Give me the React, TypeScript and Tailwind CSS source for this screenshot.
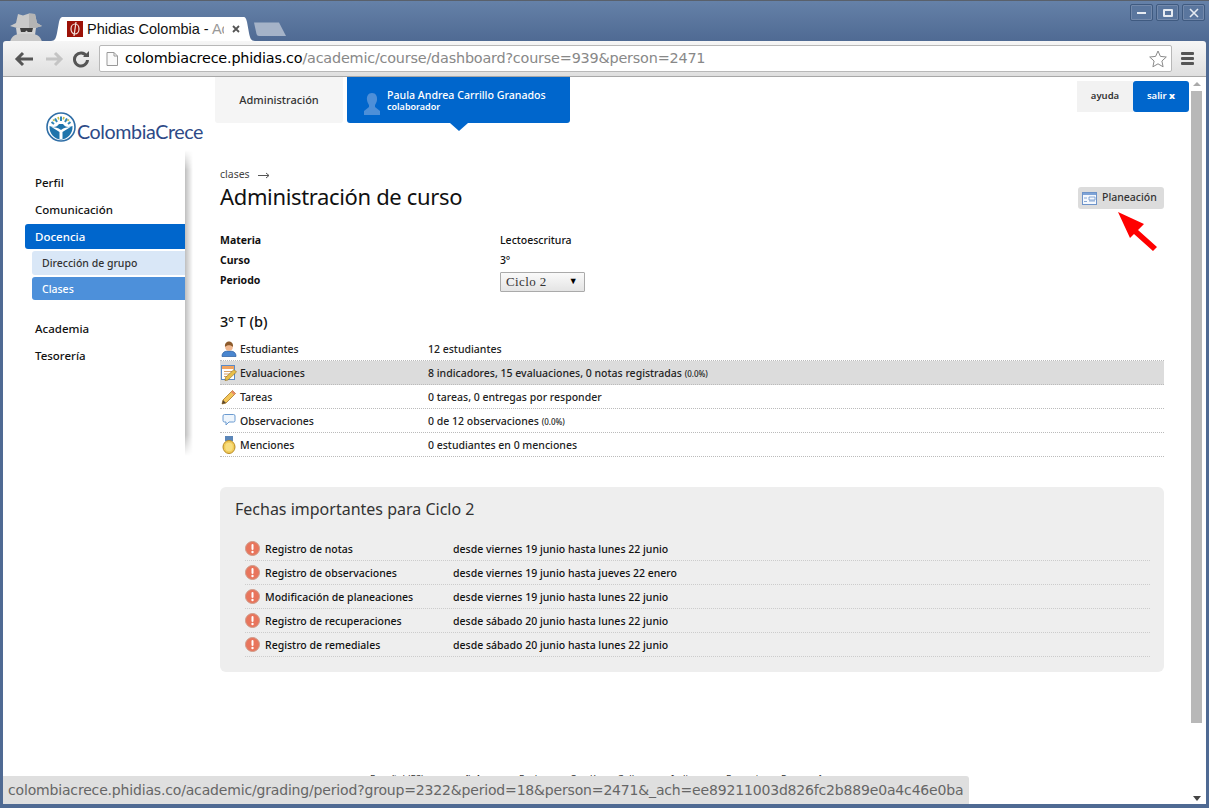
import type { ReactNode } from 'react'

const sans = 'font-["Noto_Sans",sans-serif]'

function Incognito() {
  return (
    <svg width="34" height="29" viewBox="0 0 34 29" className="shrink-0">
      <path d="M9 1 L14 2.500 L20 .5 L26 1 L28 10 L33 13 L26 15 H8 L1 13 L7 10 Z" fill="#c9c9c9" />
      <path d="M20 .5 L26 1 L28 10 L33 13 L26 15 H20 Z" fill="#b4b4b4" />
      <path d="M7 15 H27 L26 22 H8 Z" fill="#d2d2d2" />
      <path d="M11 15 H24 L23 19 H19 L17.500 17.500 L16 19 H12 Z" fill="#3f3f3f" />
      <path d="M1 29 C2 24 6 21 11 21 H23 C28 21 32 24 33 29 Z" fill="#c9c9c9" />
    </svg>
  )
}

function PhidiasFavicon() {
  return (
    <svg width="16" height="16" viewBox="0 0 16 16" className="shrink-0">
      <rect width="16" height="16" fill="#9c1208" />
      <ellipse cx="8" cy="8" rx="4" ry="5" fill="none" stroke="#f2e4df" strokeWidth="1.2" />
      <path d="M9 1 L7 15" stroke="#f2e4df" strokeWidth="1.2" />
    </svg>
  )
}

function WindowButton({ children }: { children: ReactNode }) {
  return (
    <div className="w-[23px] h-[17px] rounded-[2px] border border-[#3f5a80] bg-[#5a769e] flex items-center justify-center shadow-[inset_0_0_0_1px_#7389ab]">
      {children}
    </div>
  )
}

function TabStrip() {
  return (
    <div className="h-[41px] shrink-0 bg-gradient-to-b from-[#6581a8] to-[#4f6a93] flex items-start border-t border-[#59606b]">
      <div className="ml-[9px] mt-[12px] h-[28px] overflow-hidden"><Incognito /></div>
      <div className="ml-[8px] mt-[16px] flex items-end h-[24px]">
        <svg width="12" height="24" viewBox="0 0 12 24" className="shrink-0"><path d="M0 24 C4 24 5 21 6 16 L8 5 C9 1 10 0 12 0 V24 Z" fill="#fff" /></svg>
        <div className="h-[24px] w-[181px] bg-white flex items-center text-[#111]">
          <div className="ml-[4px] mr-[4px]"><PhidiasFavicon /></div>
          <span className="font-['Liberation_Sans',sans-serif] text-[14.500px] leading-[20px] whitespace-nowrap w-[137px] overflow-hidden">
            Phidias Colombia - <span className="text-[#999]">Ac</span>
          </span>
          <svg width="10" height="10" viewBox="0 0 10 10" className="ml-[7px]"><path d="M2 2 L8 8 M8 2 L2 8" stroke="#555" strokeWidth="1.8" /></svg>
        </div>
        <svg width="11" height="24" viewBox="0 0 11 24" className="shrink-0"><path d="M11 24 C7 24 6 21 5 16 L3 5 C2 1 1 0 0 0 V24 Z" fill="#fff" /></svg>
      </div>
      <svg width="34" height="15" viewBox="0 0 34 15" className="-ml-[2px] mt-[21px] shrink-0"><path d="M1 .5 H26 L33 14 H6 Q4 14 3.500 12 Z" fill="#a5b3c8" /></svg>
      <div className="ml-auto mr-[4px] mt-[3px] flex gap-[3px]">
        <WindowButton><div className="w-[9px] h-[2px] bg-[#e6ebf2]" /></WindowButton>
        <WindowButton><div className="w-[10px] h-[8px] border-2 border-[#e6ebf2] rounded-[1px]" /></WindowButton>
        <WindowButton>
          <svg width="10" height="10" viewBox="0 0 10 10"><path d="M1 1 L9 9 M9 1 L1 9" stroke="#e6ebf2" strokeWidth="1.6" /></svg>
        </WindowButton>
      </div>
    </div>
  )
}

function Toolbar() {
  return (
    <div className="h-[36px] shrink-0 bg-gradient-to-b from-[#f6f6f6] to-[#dfdfdf] border-b border-[#a8a8a8] flex items-center pl-[11px] pr-[12px] rounded-t-[3px]">
      <svg width="22" height="16" viewBox="0 0 22 16"><path d="M9 2 L3 8 L9 14 M3 8 H19" fill="none" stroke="#555" strokeWidth="3" /></svg>
      <svg width="22" height="16" viewBox="0 0 22 16" className="ml-[7px]"><path d="M12 2 L18 8 L12 14 M18 8 H3" fill="none" stroke="#c4c4c4" strokeWidth="3" /></svg>
      <svg width="18" height="18" viewBox="0 0 18 18" className="ml-[7px]"><path d="M14.500 6 A6.500 6.500 0 1 0 15.500 10" fill="none" stroke="#555" strokeWidth="3" /><path d="M11 7 H17 V1 Z" fill="#555" /></svg>
      <div className="ml-[9px] h-[27px] flex-1 bg-white border border-[#b8b8b8] rounded-[2px] flex items-center pl-[6px] pr-[3px]">
        <svg width="12" height="14" viewBox="0 0 12 14"><path d="M1 .5 H8 L11.500 4 V13.500 H1 Z M8 .5 V4 H11.500" fill="#fafafa" stroke="#999" /></svg>
        <span className="ml-[7px] text-[14.400px] font-['DejaVu_Sans',sans-serif] text-black whitespace-nowrap tracking-[-0.2px]">
          colombiacrece.phidias.co<span className="text-[#888]">/academic/course/dashboard?course=939&amp;person=2471</span>
        </span>
        <svg width="20" height="20" viewBox="0 0 20 20" className="ml-auto"><path d="M10 2 L12.400 7.400 L18.300 8 L13.900 12 L15.100 17.800 L10 14.800 L4.900 17.800 L6.100 12 L1.700 8 L7.600 7.400 Z" fill="white" stroke="#8a8a8a" /></svg>
      </div>
      <div className="ml-[9px] w-[13px] flex flex-col gap-[2px]">
        <div className="h-[3px] bg-[#555] rounded-[1px]" />
        <div className="h-[3px] bg-[#555] rounded-[1px]" />
        <div className="h-[3px] bg-[#555] rounded-[1px]" />
      </div>
    </div>
  )
}

function Logo() {
  return (
    <div className="flex items-center ml-[43px] mt-[30px]">
      <svg width="30" height="30" viewBox="0 0 30 30" className="shrink-0">
        <circle cx="15" cy="15" r="14" fill="white" stroke="#2f6ea6" strokeWidth="1.600" />
        <path d="M3.500 14 C8 16 11 15 13 12 H17 C19 15 22 16 26.500 14 C27 22 21 27.500 15 27.500 C9 27.500 3 22 3.500 14 Z" fill="#1f74ab" />
        <path d="M13.500 27 V20 C11 18 8 17 5.500 15 C9 15.500 12 15.500 15 18 C18 15.500 21 15.500 24.500 15 C22 17 19 18 16.500 20 V27 Z" fill="#fff" />
        <path d="M5.500 10 L8 12 M9 6.500 L11 10 M15 4.500 V9 M21 6.500 L19 10 M24.500 10 L22 12" stroke="#2f86b8" strokeWidth="2" />
        <path d="M7 7.500 L8.500 9 M12 5 L12.800 7.500 M18 5 L17.200 7.500 M23 7.500 L21.500 9" stroke="#c3c24a" strokeWidth="1.600" />
      </svg>
      <span className="ml-[1px] mt-[10px] font-['Lato',sans-serif] text-[19.700px] tracking-[-0.4px] text-[#2d4a87] whitespace-nowrap">ColombiaCrece</span>
    </div>
  )
}

function TopBar() {
  return (
    <div className="h-[54px] flex items-start shrink-0">
      <div className="w-[212px] shrink-0" />
      <div className="w-[128px] h-[46px] bg-[#f5f5f5] rounded-b-[3px] flex items-center justify-center text-[11px] text-[#333] font-medium">Administración</div>
      <div className="relative ml-[4px] w-[223px] h-[46px] bg-[#0066cc] rounded-b-[3px] flex items-center text-white">
        <svg width="18" height="24" viewBox="0 0 18 24" className="ml-[16px] mt-[8px] shrink-0">
          <path d="M9 1 C13 1 14.500 4.500 14 8 C13.700 10.500 12.500 12 12 13 V15 L17 19 V23 H1 V19 L6 15 V13 C5.500 12 4.300 10.500 4 8 C3.500 4.500 5 1 9 1 Z" fill="#4d8fd8" />
        </svg>
        <div className="ml-[6px] leading-none">
          <div className="text-[10.600px] leading-[14px] whitespace-nowrap font-medium">Paula Andrea Carrillo Granados</div>
          <div className="text-[9px] leading-[10px] font-semibold">colaborador</div>
        </div>
        <div className="absolute left-[103px] top-[46px] w-0 h-0 border-x-[9px] border-x-transparent border-t-[8px] border-t-[#0066cc]" />
      </div>
      <div className="ml-auto mr-[1px] mt-[4px] flex h-[31px] text-[9.500px] font-semibold">
        <div className="w-[56px] bg-[#f2f2f2] flex items-center justify-center text-[#333]">ayuda</div>
        <div className="w-[56px] bg-[#0066cc] rounded-[3px] flex items-center justify-center text-white">salir&nbsp;<b>x</b></div>
      </div>
    </div>
  )
}

function Sidebar() {
  const plain = 'h-[27px] pl-[32px] flex items-center text-[11.500px] font-medium text-[#111]'
  return (
    <div className="w-[182px] shrink-0 pt-[38px]">
      <div className={plain}>Perfil</div>
      <div className={plain}>Comunicación</div>
      <div className="ml-[22px] h-[25px] mt-[1px] pl-[10px] flex items-center text-[11.500px] font-medium text-white bg-[#0066cc] rounded-l-[3px]">Docencia</div>
      <div className="ml-[29px] h-[24px] mt-[2px] pl-[10px] pt-[2px] flex items-center text-[10.500px] font-medium text-[#333] bg-[#d9e7f7] rounded-l-[3px]">Dirección de grupo</div>
      <div className="ml-[29px] h-[23px] mt-[2px] pl-[10px] pt-[2px] flex items-center text-[10.500px] font-medium text-white bg-[#4d90da] rounded-l-[3px]">Clases</div>
      <div className={plain + ' mt-[15px]'}>Academia</div>
      <div className={plain}>Tesorería</div>
    </div>
  )
}

function Student() {
  return (
    <svg width="16" height="16" viewBox="0 0 16 16">
      <path d="M1 15.500 C1 11 4 10 8 10 C12 10 15 11 15 15.500 Z" fill="#4a86cf" stroke="#2a5a9c" strokeWidth=".7" />
      <circle cx="8" cy="6" r="3.800" fill="#f0b890" />
      <path d="M4 6 C3.500 2 6 .5 8 .5 C10 .5 12.500 2 12 6 C10 3.500 6 3.500 4 6 Z" fill="#8c5a2b" />
    </svg>
  )
}

function Grades() {
  return (
    <svg width="16" height="16" viewBox="0 0 16 16">
      <rect x=".5" y=".5" width="13" height="14" fill="#fff" stroke="#5a8ac6" />
      <rect x="1" y="1" width="12" height="3" fill="#f2a35e" />
      <path d="M3 6.500 H11 M3 9 H9 M3 11.500 H7" stroke="#d9a066" />
      <path d="M4.500 12.500 L13 4.500 L15.500 7 L7 15 L4 15.500 Z" fill="#e8bf4a" stroke="#8c6a1f" strokeWidth=".6" />
    </svg>
  )
}

function Pencil() {
  return (
    <svg width="16" height="16" viewBox="0 0 16 16">
      <path d="M1 15 L2 11 L11.500 1.500 L14.500 4.500 L5 14 Z" fill="#f3c65a" stroke="#a97a24" strokeWidth=".8" />
      <path d="M1 15 L2 11 L5 14 Z" fill="#5a4630" />
      <path d="M11.500 1.500 L14.500 4.500 L13 6 L10 3 Z" fill="#e88a6a" />
    </svg>
  )
}

function Bubble() {
  return (
    <svg width="16" height="16" viewBox="0 0 16 16">
      <path d="M3.500 1.500 H12.500 Q14 1.500 14 3 V7.500 Q14 9 12.500 9 H8 L5 12 V9 H3.500 Q2 9 2 7.500 V3 Q2 1.500 3.500 1.500 Z" fill="#eef5fc" stroke="#6a9ad0" />
    </svg>
  )
}

function Medal() {
  return (
    <svg width="16" height="18" viewBox="0 0 16 18">
      <rect x="4" y="0" width="8" height="5" fill="#5b86b8" />
      <ellipse cx="8" cy="11" rx="6" ry="6.500" fill="#f2cc58" stroke="#b88a24" />
      <ellipse cx="8" cy="11" rx="3.800" ry="4.200" fill="#f8de80" />
    </svg>
  )
}

function Alert() {
  return (
    <svg width="15" height="15" viewBox="0 0 15 15" className="shrink-0">
      <circle cx="7.500" cy="7.500" r="7" fill="#e8755c" stroke="#cf9a88" />
      <rect x="6.500" y="3" width="2" height="6" rx="1" fill="#fff" />
      <circle cx="7.500" cy="11" r="1.200" fill="#fff" />
    </svg>
  )
}

const summaryRows: { icon: ReactNode; label: string; value: string; note?: string; active?: boolean }[] = [
  { icon: <Student />, label: 'Estudiantes', value: '12 estudiantes' },
  { icon: <Grades />, label: 'Evaluaciones', value: '8 indicadores, 15 evaluaciones, 0 notas registradas', note: '(0.0%)', active: true },
  { icon: <Pencil />, label: 'Tareas', value: '0 tareas, 0 entregas por responder' },
  { icon: <Bubble />, label: 'Observaciones', value: '0 de 12 observaciones', note: '(0.0%)' },
  { icon: <Medal />, label: 'Menciones', value: '0 estudiantes en 0 menciones' },
]

const dates = [
  ['Registro de notas', 'desde viernes 19 junio hasta lunes 22 junio'],
  ['Registro de observaciones', 'desde viernes 19 junio hasta jueves 22 enero'],
  ['Modificación de planeaciones', 'desde viernes 19 junio hasta lunes 22 junio'],
  ['Registro de recuperaciones', 'desde sábado 20 junio hasta lunes 22 junio'],
  ['Registro de remediales', 'desde sábado 20 junio hasta lunes 22 junio'],
]

function Content() {
  return (
    <div className="flex-1 relative pl-[35px] pr-[26px] pt-[37px]">
      <div className="absolute left-0 top-[19px] w-[8px] h-[306px] bg-gradient-to-r from-[#00000040] to-transparent [mask-image:linear-gradient(to_bottom,transparent,black_20px,black_285px,transparent)]" />
      <div className="flex items-center h-[14px] text-[10.500px] text-[#444]">
        clases
        <svg width="12" height="7" viewBox="0 0 12 7" className="ml-[8px]"><path d="M0 3.500 H11 M8 1 L11 3.500 L8 6" fill="none" stroke="#555" /></svg>
      </div>
      <div className="flex items-start justify-between">
        <h1 className="text-[22px] leading-[32px] text-[#111] -mt-[2px] tracking-[-0.35px]">Administración de curso</h1>
        <div className="relative mt-[5px] w-[86px] h-[22px] bg-[#dcdcdc] rounded-[3px] flex items-center pl-[4px] text-[10.500px] font-medium text-[#333]">
          <svg width="15" height="13" viewBox="0 0 15 13" className="shrink-0">
            <rect x=".5" y=".5" width="14" height="12" fill="#f4f8fd" stroke="#6d93c9" />
            <rect x="1" y="1" width="13" height="2" fill="#7ea3d6" />
            <path d="M2 6 H5 M2 9.500 H5 M7 5 H13 V8 H7 Z M7 9 H13" stroke="#6d93c9" fill="none" strokeWidth=".8" />
          </svg>
          <span className="ml-[5px]">Planeación</span>
          <svg width="42" height="42" viewBox="0 0 42 42" className="absolute left-[39px] top-[24px]">
            <path d="M1 1 L27 13 L21 19 L40 36 L36 40 L17 23 L13 27 Z" fill="#ff0000" />
          </svg>
        </div>
      </div>
      <div className="mt-[19px] grid grid-cols-[280px_1fr] text-[10.500px] auto-rows-[20px] items-center text-[#111]">
        <b className="font-bold">Materia</b><span className="font-medium">Lectoescritura</span>
        <b className="font-bold">Curso</b><span className="font-medium">3º</span>
        <b className="font-bold self-center">Periodo</b>
        <div className="mt-[2px] w-[85px] h-[20px] bg-gradient-to-b from-[#fafafa] to-[#e4e4e4] border border-[#aaa] rounded-[1px] flex items-center justify-between pl-[5px] pr-[6px] font-['Liberation_Serif',serif] text-[13px] tracking-[0.4px] text-[#333]">
          Ciclo 2 <span className="text-[9px] text-black">▼</span>
        </div>
      </div>
      <h2 className="mt-[19px] text-[14.500px] font-medium leading-[22px] text-[#111]">3º T (b)</h2>
      <div className="mt-[5px]">
        {summaryRows.map((row) => (
          <div key={row.label} className={`h-[24px] flex items-center border-b border-dotted border-[#bbb] text-[10.500px] font-medium text-[#222] ${row.active ? 'bg-[#dcdcdc]' : ''}`}>
            <div className="w-[20px] pl-[1px] flex items-center">{row.icon}</div>
            <div className="w-[188px] pt-[2px]">{row.label}</div>
            <div className="whitespace-nowrap pt-[2px]">
              {row.value} {row.note && <span className="text-[8px]">{row.note}</span>}
            </div>
          </div>
        ))}
      </div>
      <div className="mt-[30px] h-[185px] bg-[#eeeeee] rounded-[6px] pl-[15px] pr-[14px] pt-[10px]">
        <h3 className="text-[16px] leading-[24px] text-[#333]">Fechas importantes para Ciclo 2</h3>
        <div className="mt-[16px] ml-[10px]">
          {dates.map(([label, range]) => (
            <div key={label} className="h-[24px] flex items-center border-b border-dotted border-[#ccc] text-[10.500px] font-medium text-[#111]">
              <Alert />
              <div className="ml-[5px] w-[188px] whitespace-nowrap pt-[2px]">{label}</div>
              <div className="whitespace-nowrap pt-[2px]">{range}</div>
            </div>
          ))}
        </div>
      </div>
    </div>
  )
}

function Footer() {
  return (
    <div className="h-[32px] shrink-0 pl-[367px] flex text-[9.500px] leading-[14px] whitespace-nowrap text-[#333]">
      <span className="w-[73px]">Español (ES)</span>
      <span className="w-[76px] font-bold">Español (LA)</span>
      <span className="w-[51px]">Euskara</span>
      <span className="w-[47px]">Català</span>
      <span className="w-[54px]">Gallego</span>
      <span className="w-[55px]">Italiano</span>
      <span className="w-[55px]">Français</span>
      <span>Português</span>
    </div>
  )
}

function Scrollbar() {
  return (
    <div className="w-[16px] shrink-0 bg-white flex flex-col items-start pl-[1px]">
      <div className="h-[14px] w-[11px] flex items-center justify-center"><div className="w-0 h-0 border-x-[4px] border-x-transparent border-b-[4px] border-b-[#aaa]" /></div>
      <div className="w-[11px] h-[632px] bg-[#b8b8b8]" />
      <div className="mt-auto h-[12px] w-[11px] flex items-center justify-center"><div className="w-0 h-0 border-x-[4px] border-x-transparent border-t-[5px] border-t-[#444]" /></div>
    </div>
  )
}

export default function App() {
  return (
    <div className={`${sans} w-[1209px] h-[808px] overflow-hidden flex flex-col bg-[#4f6a93] px-[3px] pb-[4px] relative`}>
      <div className="-mx-[3px]"><TabStrip /></div>
      <Toolbar />
      <div className="flex-1 min-h-0 bg-white flex relative">
        <div className="flex-1 min-w-0 flex flex-col">
          <div className="absolute left-0 top-0"><Logo /></div>
          <TopBar />
          <div className="flex flex-1 min-h-0">
            <Sidebar />
            <Content />
          </div>
          <Footer />
        </div>
        <Scrollbar />
        <div className="absolute left-0 bottom-0 w-[966px] h-[28px] bg-[#dfdfdf] rounded-tr-[3px] flex items-center pl-[5px] font-['DejaVu_Sans',sans-serif] text-[14px] tracking-[-0.17px] text-[#666] whitespace-nowrap overflow-hidden">
          colombiacrece.phidias.co/academic/grading/period?group=2322&amp;period=18&amp;person=2471&amp;_ach=ee89211003d826fc2b889e0a4c46e0ba
        </div>
      </div>
    </div>
  )
}
